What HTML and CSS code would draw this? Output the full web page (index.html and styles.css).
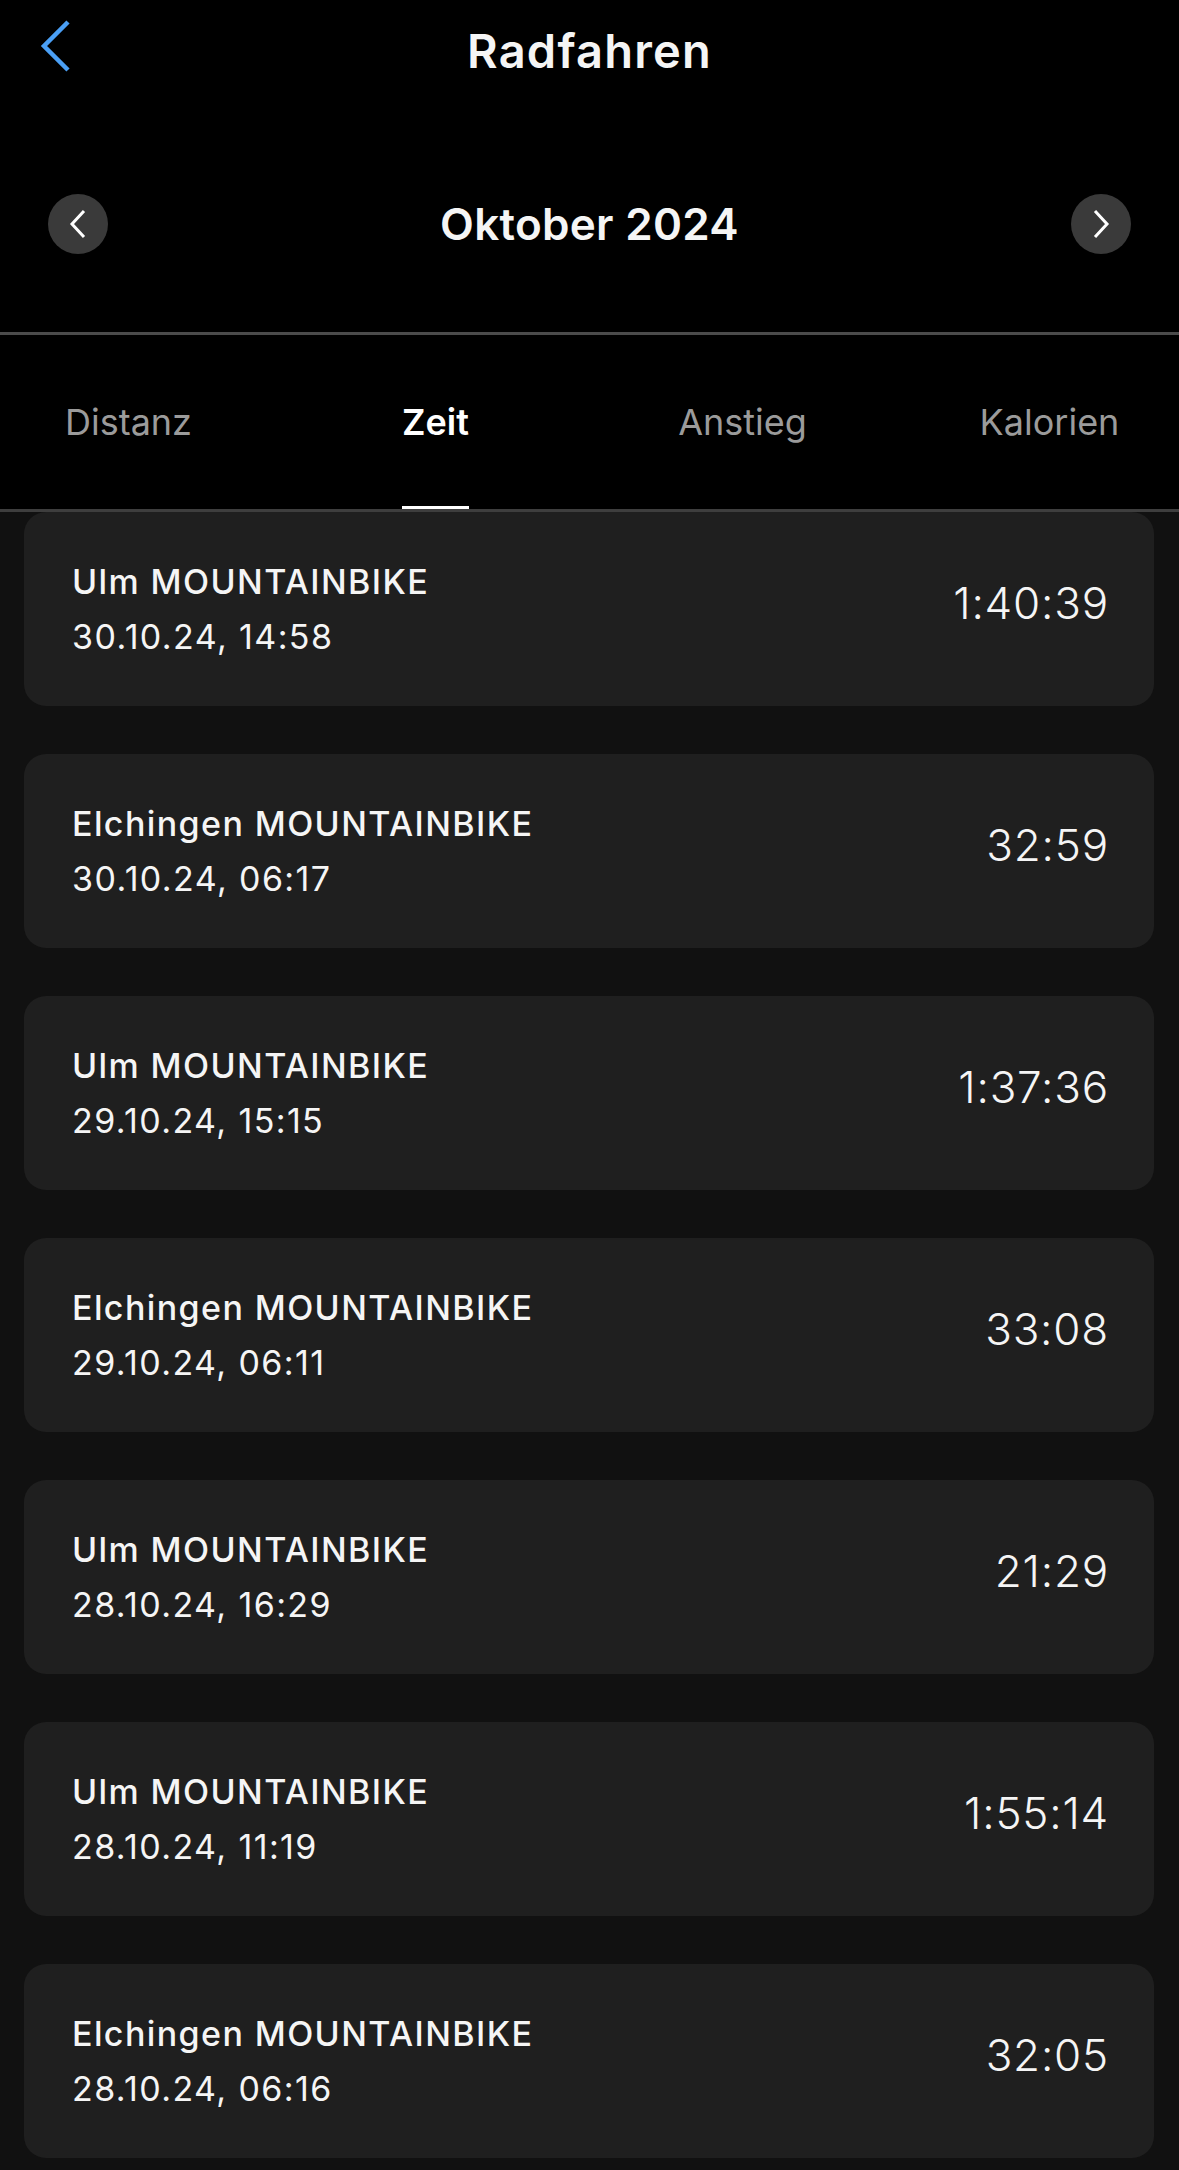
FILE: index.html
```html
<!DOCTYPE html>
<html lang="de">
<head>
    <meta charset="UTF-8">
    <meta name="viewport" content="width=device-width, initial-scale=1.0">
    <title>Radfahren</title>
    <link rel="stylesheet" href="styles.css">
</head>
<body>
    <header class="header">
        <div class="topbar">
            <button class="back-btn" aria-label="Zurück">
                <svg width="32" height="54" viewBox="0 0 32 54">
                    <polyline points="28,3 4,27 28,51" fill="none" stroke="#4a9ff5" stroke-width="4.5" stroke-linejoin="miter"/>
                </svg>
            </button>
            <h1>Radfahren</h1>
            <div></div>
        </div>

        <div class="month-nav">
            <button class="round-btn" aria-label="Vorheriger Monat">
                <svg width="18" height="30" viewBox="0 0 18 30">
                    <polyline points="15,2 3,15 15,28" fill="none" stroke="#fff" stroke-width="3"/>
                </svg>
            </button>
            <h2>Oktober 2024</h2>
            <button class="round-btn" aria-label="Nächster Monat">
                <svg width="18" height="30" viewBox="0 0 18 30">
                    <polyline points="3,2 15,15 3,28" fill="none" stroke="#fff" stroke-width="3"/>
                </svg>
            </button>
        </div>
    </header>

    <nav class="tabs">
        <div class="tab"><span>Distanz</span></div>
        <div class="tab active"><span>Zeit</span></div>
        <div class="tab"><span>Anstieg</span></div>
        <div class="tab"><span>Kalorien</span></div>
    </nav>

    <main class="ride-list">
        <div class="ride-card">
            <div class="ride-info">
                <h3>Ulm MOUNTAINBIKE</h3>
                <p>30.10.24, 14:58</p>
            </div>
            <div class="ride-time">1:40:39</div>
        </div>
        <div class="ride-card">
            <div class="ride-info">
                <h3>Elchingen MOUNTAINBIKE</h3>
                <p>30.10.24, 06:17</p>
            </div>
            <div class="ride-time">32:59</div>
        </div>
        <div class="ride-card">
            <div class="ride-info">
                <h3>Ulm MOUNTAINBIKE</h3>
                <p>29.10.24, 15:15</p>
            </div>
            <div class="ride-time">1:37:36</div>
        </div>
        <div class="ride-card">
            <div class="ride-info">
                <h3>Elchingen MOUNTAINBIKE</h3>
                <p>29.10.24, 06:11</p>
            </div>
            <div class="ride-time">33:08</div>
        </div>
        <div class="ride-card">
            <div class="ride-info">
                <h3>Ulm MOUNTAINBIKE</h3>
                <p>28.10.24, 16:29</p>
            </div>
            <div class="ride-time">21:29</div>
        </div>
        <div class="ride-card">
            <div class="ride-info">
                <h3>Ulm MOUNTAINBIKE</h3>
                <p>28.10.24, 11:19</p>
            </div>
            <div class="ride-time">1:55:14</div>
        </div>
        <div class="ride-card">
            <div class="ride-info">
                <h3>Elchingen MOUNTAINBIKE</h3>
                <p>28.10.24, 06:16</p>
            </div>
            <div class="ride-time">32:05</div>
        </div>
    </main>
</body>
</html>
```

FILE: styles.css
```css
* {
    margin: 0;
    padding: 0;
    box-sizing: border-box;
}

body {
    font-family: 'Inter', 'Noto Sans', sans-serif;
    background-color: #111111;
    color: #f5f5f5;
    width: 1179px;
    height: 2170px;
    overflow: hidden;
}

button {
    background: none;
    border: none;
    cursor: pointer;
}

.header {
    background-color: #000;
    border-bottom: 3px solid #4b4b4b;
}

.topbar {
    height: 100px;
    display: grid;
    grid-template-columns: 1fr auto 1fr;
    align-items: center;
}

.back-btn {
    justify-self: start;
    margin-left: 40px;
    margin-top: -8px;
    display: flex;
}

.topbar h1 {
    font-size: 47px;
    font-weight: 600;
    letter-spacing: 1.2px;
}

.month-nav {
    display: flex;
    justify-content: space-between;
    align-items: center;
    padding: 94px 48px 78px;
}

.month-nav h2 {
    font-size: 44px;
    font-weight: 600;
    letter-spacing: 0.3px;
}

.round-btn {
    width: 60px;
    height: 60px;
    border-radius: 50%;
    background-color: #3a3a3a;
    display: flex;
    align-items: center;
    justify-content: center;
}

.tabs {
    height: 177px;
    display: flex;
    margin-left: -25px;
    overflow: hidden;
    background-color: #000;
    border-bottom: 3px solid #3e3e3e;
}

.tab {
    flex: 0 0 307px;
    display: flex;
    justify-content: center;
    font-size: 36px;
    color: #9b9b9b;
}

.tab span {
    display: flex;
    align-items: center;
    position: relative;
}

.tab.active {
    color: #fff;
    font-weight: 600;
}

.tab.active span::after {
    content: "";
    position: absolute;
    left: 0;
    right: 0;
    bottom: 0;
    height: 3px;
    background-color: #fff;
}

.ride-list {
    display: flex;
    flex-direction: column;
    gap: 48px;
    padding: 0 25px 12px 24px;
}

.ride-card {
    height: 194px;
    background-color: #1f1f1f;
    border-radius: 22px;
    display: flex;
    justify-content: space-between;
    align-items: center;
    padding: 0 45px 0 48px;
}

.ride-info h3 {
    font-size: 34px;
    font-weight: 500;
    line-height: 55px;
    letter-spacing: 1.4px;
}

.ride-info p {
    font-size: 34px;
    line-height: 55px;
    letter-spacing: 1.4px;
}

.ride-time {
    font-size: 44px;
    font-weight: 300;
    letter-spacing: 0.8px;
    margin-bottom: 12px;
}
```
